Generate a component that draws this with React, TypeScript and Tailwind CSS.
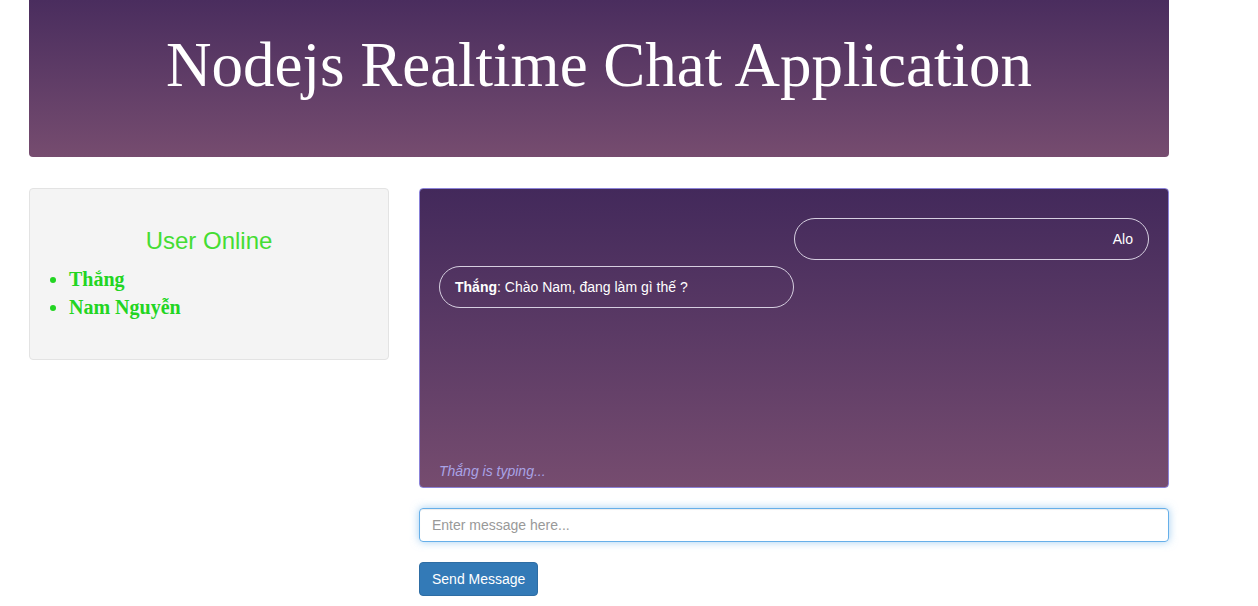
export default function App() {
  return (
    <div className="min-h-screen bg-white font-['Liberation_Sans',Arial,sans-serif] text-[14px] text-[#333]">
      <div className="ml-[29px] w-[1140px]">
        <header className="flex h-[157px] justify-center rounded-b-[4px] bg-gradient-to-b from-[#4a2d5e] to-[#764c6f] pt-[26px]">
          <h1 className="font-['Liberation_Serif','Times_New_Roman',serif] text-[63px] leading-[78px] font-normal text-white">
            Nodejs Realtime Chat Application
          </h1>
        </header>

        <div className="mt-[31px] flex gap-[30px]">
          <div className="h-[172px] w-[360px] rounded-[4px] border border-[#e3e3e3] bg-[#f4f4f4] px-[19px] pt-[39px]">
            <h3 className="text-center text-[24px] leading-[26px] text-[#44dd33]">User Online</h3>
            <ul className="mt-[11px] list-disc pl-[20px] font-['Liberation_Serif','Times_New_Roman',serif] text-[20px] leading-[28px] font-bold text-[#22d522] marker:text-[#22d522]">
              <li>Thắng</li>
              <li>Nam Nguyễn</li>
            </ul>
          </div>

          <div className="flex w-[750px] flex-col">
            <div className="flex h-[300px] flex-col rounded-[4px] border border-[#8b82d8] bg-gradient-to-b from-[#43295b] to-[#764c6f] px-[19px] pt-[29px] pb-[5px]">
              <div className="flex justify-end">
                <div className="flex h-[42px] w-1/2 items-center justify-end rounded-full border border-[#d6cfe0] px-[15px] text-white">
                  Alo
                </div>
              </div>
              <div className="mt-[6px] flex justify-start">
                <div className="flex h-[42px] w-1/2 items-center rounded-full border border-[#d6cfe0] px-[15px] text-white">
                  <span>
                    <b>Thắng</b>: Chào Nam, đang làm gì thế ?
                  </span>
                </div>
              </div>
              <div className="mt-auto italic text-[#a9a3e6]">Thắng is typing...</div>
            </div>

            <input
              autoFocus
              className="mt-[20px] h-[34px] w-full rounded-[4px] border border-[#66afe9] px-[12px] text-[14px] text-[#555] shadow-[inset_0_1px_1px_rgba(0,0,0,0.075),0_0_8px_rgba(102,175,233,0.6)] outline-none placeholder:text-[#999]"
              placeholder="Enter message here..."
            />

            <div className="mt-[20px]">
              <button className="h-[34px] rounded-[4px] border border-[#2e6da4] bg-[#337ab7] px-[12px] text-[14px] text-white">
                Send Message
              </button>
            </div>
          </div>
        </div>
      </div>
    </div>
  );
}
